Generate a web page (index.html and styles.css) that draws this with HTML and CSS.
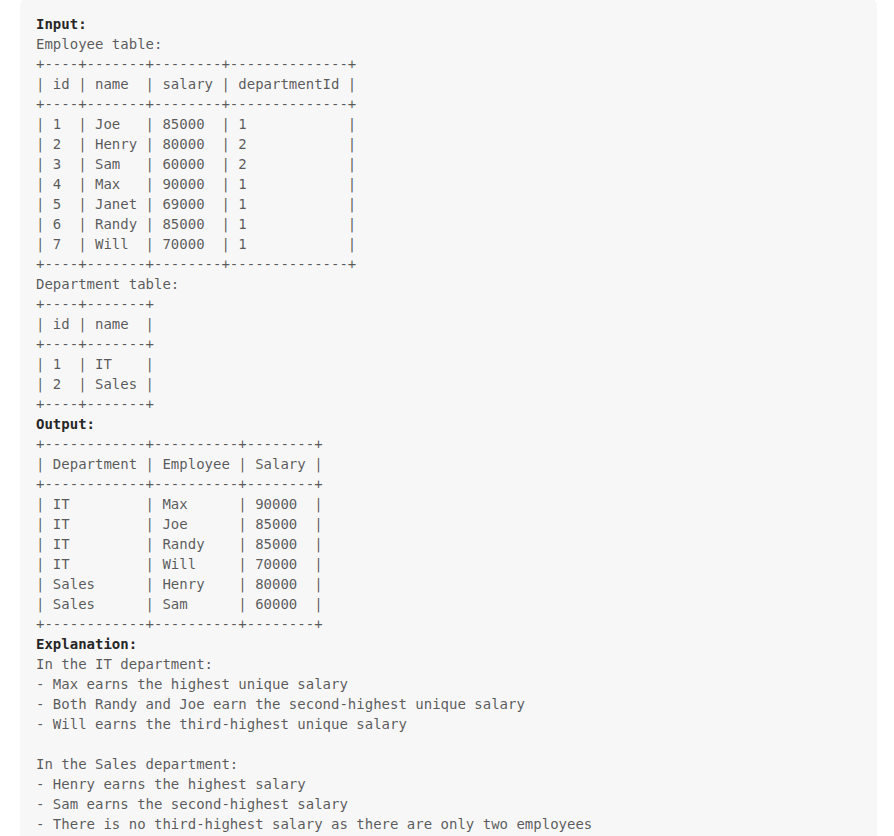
FILE: index.html
```html
<!DOCTYPE html>
<html>
<head>
<meta charset="utf-8">
<link rel="stylesheet" href="styles.css">
</head>
<body>
<pre class="example"><strong class="label">Input:</strong>
Employee table:
+----+-------+--------+--------------+
| id | name  | salary | departmentId |
+----+-------+--------+--------------+
| 1  | Joe   | 85000  | 1            |
| 2  | Henry | 80000  | 2            |
| 3  | Sam   | 60000  | 2            |
| 4  | Max   | 90000  | 1            |
| 5  | Janet | 69000  | 1            |
| 6  | Randy | 85000  | 1            |
| 7  | Will  | 70000  | 1            |
+----+-------+--------+--------------+
Department table:
+----+-------+
| id | name  |
+----+-------+
| 1  | IT    |
| 2  | Sales |
+----+-------+
<strong class="label">Output:</strong>
+------------+----------+--------+
| Department | Employee | Salary |
+------------+----------+--------+
| IT         | Max      | 90000  |
| IT         | Joe      | 85000  |
| IT         | Randy    | 85000  |
| IT         | Will     | 70000  |
| Sales      | Henry    | 80000  |
| Sales      | Sam      | 60000  |
+------------+----------+--------+
<strong class="label">Explanation:</strong>
In the IT department:
- Max earns the highest unique salary
- Both Randy and Joe earn the second-highest unique salary
- Will earns the third-highest unique salary

In the Sales department:
- Henry earns the highest salary
- Sam earns the second-highest salary
- There is no third-highest salary as there are only two employees</pre>
</body>
</html>
```

FILE: styles.css
```css
html, body {
  margin: 0;
  padding: 0;
  background: #ffffff;
}

.example {
  margin: -2px 17px 0 20px;
  padding: 16px 16px 16px 16px;
  background: #f7f7f8;
  border-radius: 8px;
  font-family: "DejaVu Sans Mono", monospace;
  font-size: 14px;
  line-height: 20px;
  color: rgba(38, 38, 38, 0.75);
  white-space: pre;
  overflow: hidden;
}

.label {
  color: #262626;
  font-weight: 700;
}
```
